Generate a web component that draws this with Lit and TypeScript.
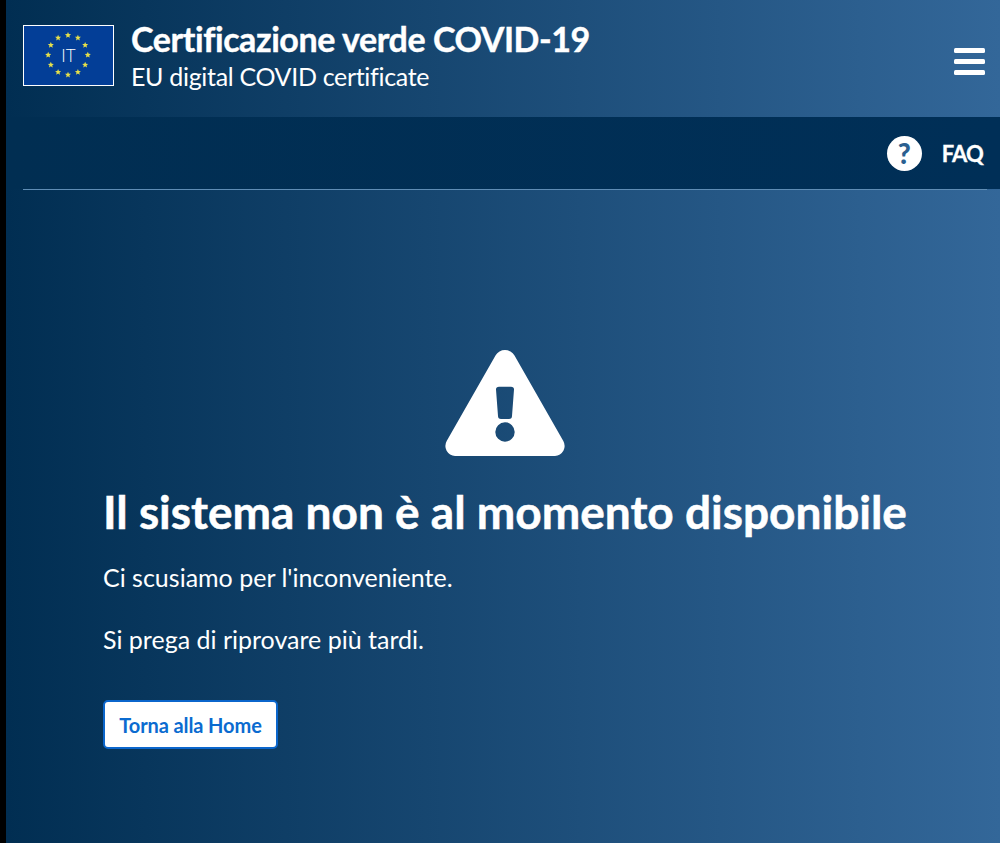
import { LitElement, html, css, svg } from "lit";
import { customElement } from "lit/decorators.js";

// ring of 12 stars round the country code
const stars = Array.from({ length: 12 }, (_, i) => {
  const a = (i * Math.PI) / 6;
  return [45 + 20.5 * Math.sin(a), 30 - 20.5 * Math.cos(a)];
});

const star = (cx: number, cy: number) => {
  const pts = Array.from({ length: 10 }, (_, i) => {
    const r = i % 2 ? 1.5 : 3.3;
    const a = (i * Math.PI) / 5;
    return `${(cx + r * Math.sin(a)).toFixed(2)},${(cy - r * Math.cos(a)).toFixed(2)}`;
  });
  return svg`<polygon points=${pts.join(" ")} fill="#e6e04a"></polygon>`;
};

@customElement("app-root")
export class AppRoot extends LitElement {
  static styles = css`
    :host {
      display: block;
      height: 843px;
      overflow: hidden;
      background: #000;
      padding-left: 6px;
      box-sizing: border-box;
      font-family: "Lato", "Noto Sans", sans-serif;
      font-variant-ligatures: none;
      color: #fff;
    }
    .page {
      height: 100%;
      display: flex;
      flex-direction: column;
      background: linear-gradient(90deg, #012e52 0%, #336799 100%);
    }
    .top {
      height: 117px;
      box-sizing: border-box;
      display: flex;
      align-items: flex-start;
      padding: 25px 15px 0 17px;
    }
    .flag {
      width: 91px;
      height: 61px;
      box-sizing: border-box;
      border: 1.5px solid #fff;
      background: #033e97;
      flex: none;
      position: relative;
    }
    .flag svg {
      display: block;
      width: 88px;
      height: 58px;
    }
    .flag span {
      position: absolute;
      inset: 0;
      display: flex;
      align-items: center;
      justify-content: center;
      font-size: 17px;
      font-weight: 300;
    }
    .titles {
      margin-left: 17px;
      flex: 1;
      margin-top: -6px;
    }
    .title {
      font-size: 34px;
      line-height: 40px;
      font-weight: 700;
      letter-spacing: -0.42px;
      -webkit-text-stroke: 0.4px #fff;
    }
    .sub {
      font-size: 25px;
      line-height: 34px;
      letter-spacing: -0.32px;
    }
    .burger {
      width: 31px;
      margin-top: 23px;
      display: flex;
      flex-direction: column;
      gap: 6px;
    }
    .burger i {
      display: block;
      height: 5px;
      border-radius: 1.5px;
      background: #fff;
    }
    .nav {
      height: 72px;
      flex: none;
      background: linear-gradient(90deg, #012e52 0%, #002f57 100%);
      display: flex;
      align-items: center;
      justify-content: flex-end;
      gap: 20px;
      padding: 0 17px 0 0;
      font-size: 22px;
      font-weight: 700;
    }
    .faq {
      letter-spacing: -0.8px;
      -webkit-text-stroke: 0.3px #fff;
    }
    .help {
      width: 35px;
      height: 35px;
      border-radius: 50%;
      background: #fff;
      color: #2a5f90;
      display: flex;
      align-items: center;
      justify-content: center;
      font-size: 28px;
      font-weight: 900;
    }
    .rule {
      height: 1px;
      margin: 0 13px 0 17px;
      background: #5f8db5;
      flex: none;
    }
    main {
      padding: 160px 0 0 97px;
    }
    .warn {
      display: block;
      width: 120px;
      height: 106px;
      margin-left: 342px;
    }
    h1 {
      margin: 28px 0 0;
      font-size: 46px;
      line-height: 56px;
      font-weight: 700;
      white-space: nowrap;
      -webkit-text-stroke: 0.5px #fff;
    }
    p {
      margin: 0;
      font-size: 25px;
      line-height: 32px;
    }
    h1 + p {
      margin-top: 21px;
    }
    p + p {
      margin-top: 30px;
    }
    button {
      display: block;
      margin-top: 45px;
      width: 175px;
      height: 49px;
      padding: 0;
      background: #fff;
      border: 2px solid #0b66cc;
      border-radius: 5px;
      color: #0b6bd0;
      font: 700 20px "Lato", "Noto Sans", sans-serif;
      letter-spacing: -0.1px;
    }
  `;

  render() {
    return html`
      <div class="page">
        <header class="top">
          <div class="flag">
            <svg viewBox="0 0 90 60">${stars.map(([x, y]) => star(x, y))}</svg>
            <span>IT</span>
          </div>
          <div class="titles">
            <div class="title">Certificazione verde COVID-19</div>
            <div class="sub">EU digital COVID certificate</div>
          </div>
          <div class="burger"><i></i><i></i><i></i></div>
        </header>
        <nav class="nav">
          <span class="help">?</span>
          <span class="faq">FAQ</span>
        </nav>
        <div class="rule"></div>
        <main>
          <svg class="warn" viewBox="0 0 120 106">
            <path
              fill="#fff"
              fill-rule="evenodd"
              d="M50.5 5.5 A11 11 0 0 1 69.5 5.5 L118.3 91 A10 10 0 0 1 110 106 L10 106 A10 10 0 0 1 1.7 91 Z
                 M51 39.5 Q51 36.7 54 36.7 L66 36.7 Q69 36.7 69 39.5 L67 66 Q67 69 64 69 L56 69 Q53 69 53 66 Z
                 M60 72.3 A9.7 9.7 0 1 0 60 91.7 A9.7 9.7 0 1 0 60 72.3 Z"
            ></path>
          </svg>
          <h1>Il sistema non è al momento disponibile</h1>
          <p>Ci scusiamo per l'inconveniente.</p>
          <p>Si prega di riprovare più tardi.</p>
          <button>Torna alla Home</button>
        </main>
      </div>
    `;
  }
}
